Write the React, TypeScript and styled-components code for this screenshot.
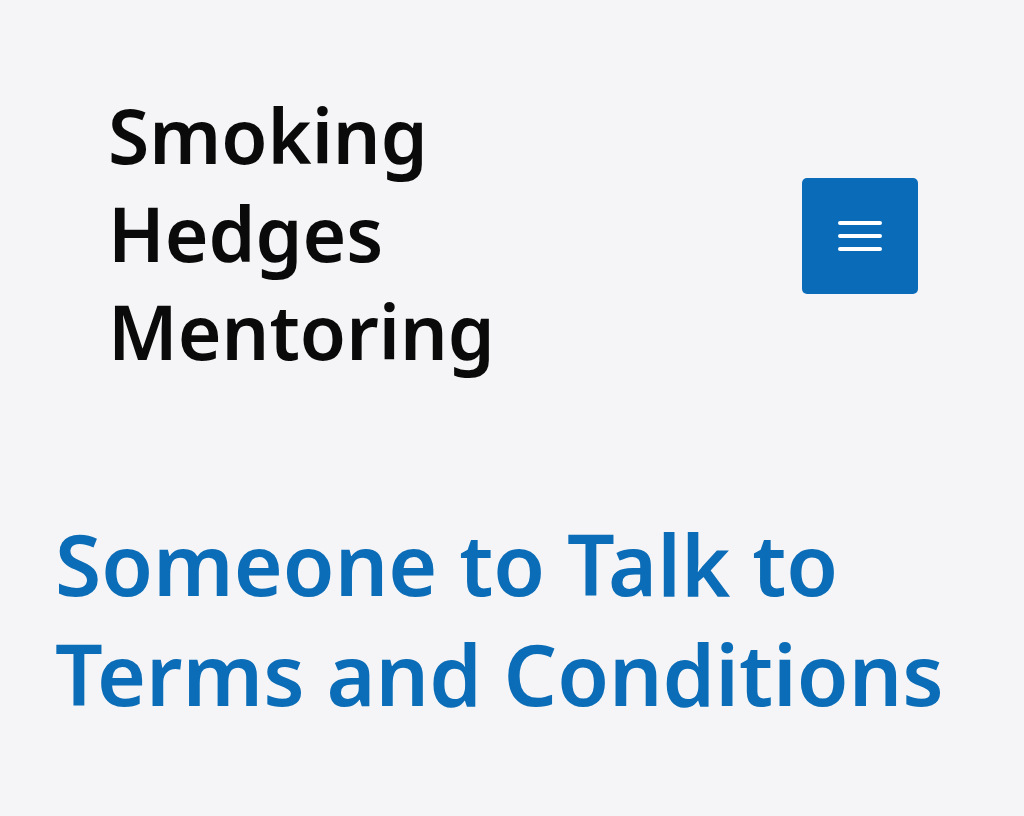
import styled, { createGlobalStyle } from 'styled-components'

const GlobalStyle = createGlobalStyle`
  html, body {
    margin: 0;
    padding: 0;
    background: #f5f5f7;
  }

  body {
    font-family: 'Noto Sans', 'Open Sans', sans-serif;
    -webkit-font-smoothing: antialiased;
  }
`

const Page = styled.div`
  min-height: 816px;
  background: #f5f5f7;
  overflow: hidden;
`

const Header = styled.header`
  display: flex;
  align-items: center;
  justify-content: space-between;
  padding: 86px 106px 0 108px;
`

const SiteTitle = styled.h1`
  margin: 0;
  font-size: 75px;
  line-height: 98px;
  font-weight: 600;
  color: #0a0a0a;
`

const MenuButton = styled.button`
  width: 116px;
  height: 116px;
  margin-top: 6px;
  border: 0;
  border-radius: 5px;
  background: #0a6cb9;
  display: flex;
  align-items: center;
  justify-content: center;
  cursor: pointer;
  padding: 0;
`

const Content = styled.main`
  padding: 129px 55px 0;
`

const PageTitle = styled.h2`
  margin: 0;
  font-size: 84px;
  line-height: 110px;
  font-weight: 600;
  color: #0b6db7;
`

const Burger = () => (
  <svg width='46' height='34' viewBox='0 0 46 34' fill='none'>
    <path
      d='M3 4h40M3 17h40M3 30h40'
      stroke='#fff'
      strokeWidth='4'
      strokeLinecap='round'
    />
  </svg>
)

export default function App() {
  return (
    <Page>
      <GlobalStyle />
      <Header>
        <SiteTitle>
          Smoking
          <br />
          Hedges
          <br />
          Mentoring
        </SiteTitle>
        <MenuButton aria-label='Menu'>
          <Burger />
        </MenuButton>
      </Header>
      <Content>
        <PageTitle>
          Someone to Talk to
          <br />
          Terms and Conditions
        </PageTitle>
      </Content>
    </Page>
  )
}
